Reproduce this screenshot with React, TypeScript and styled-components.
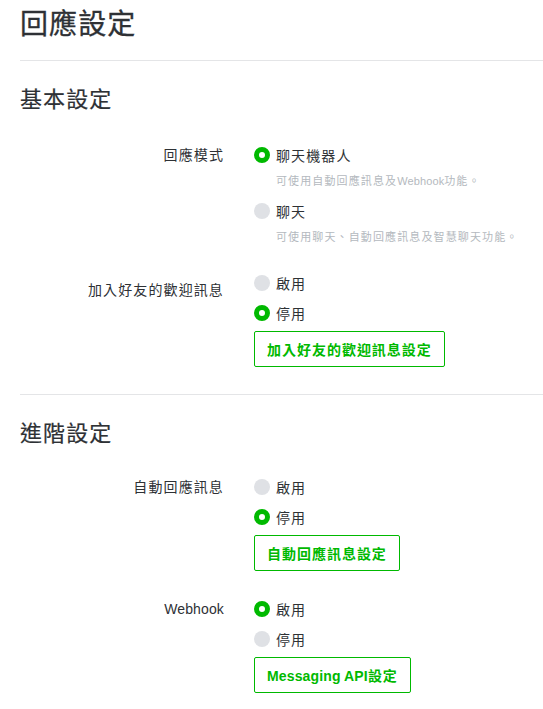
import * as React from "react"
import styled, { createGlobalStyle } from "styled-components"

const GREEN = "#00b900"

const GlobalStyle = createGlobalStyle`
    body {
        margin: 0;
        background: #fff;
        font-family: "Liberation Sans", "Noto Sans CJK TC", sans-serif;
        color: #2e3135;
        letter-spacing: 0.07em;
    }
`

const Page = styled.div`
    padding: 8px 0 40px 20px;
`

const Title = styled.h1`
    margin: 0;
    font-size: 28px;
    line-height: 34px;
    font-weight: 400;
    -webkit-text-stroke: 0.3px currentColor;
`

const Divider = styled.div<{ $top: number }>`
    height: 1px;
    background: #e4e5e7;
    margin-top: ${p => p.$top}px;
`

const Section = styled.section``

const SectionTitle = styled.h2`
    margin: 24px 0 0;
    font-size: 22px;
    line-height: 30px;
    font-weight: 400;
    -webkit-text-stroke: 0.2px currentColor;
`

const Fields = styled.div<{ $top: number }>`
    display: flex;
    flex-direction: column;
    gap: 28px;
    margin-top: ${p => p.$top}px;
`

const Field = styled.div`
    display: grid;
    grid-template-columns: 204px 1fr;
    column-gap: 30px;
`

const Label = styled.div<{ $offset?: number }>`
    text-align: right;
    font-size: 14px;
    line-height: 20px;
    padding-top: ${p => p.$offset || 0}px;
`

// latin words run tighter than the CJK text around them
const Latin = styled.span`
    letter-spacing: 0.01em;
`

const Options = styled.div`
    display: flex;
    flex-direction: column;
    align-items: flex-start;
`

const Option = styled.label`
    display: flex;
    align-items: center;
    gap: 6px;
    height: 20px;
    font-size: 14px;
    cursor: pointer;

    & + & {
        margin-top: 10px;
    }
`

const Radio = styled.span<{ $checked: boolean }>`
    box-sizing: border-box;
    width: 16px;
    height: 16px;
    border-radius: 50%;
    background: ${p => (p.$checked ? "#fff" : "#dfe1e5")};
    border: ${p => (p.$checked ? `5px solid ${GREEN}` : "none")};
`

const Desc = styled.div`
    margin: 8px 0 0 22px;
    font-size: 11px;
    line-height: 16px;
    color: #b4b9be;

    & + ${Option} {
        margin-top: 12px;
    }
`

const Button = styled.button`
    margin-top: 8px;
    height: 36px;
    padding: 0 12px;
    background: #fff;
    border: 1px solid ${GREEN};
    border-radius: 2px;
    color: ${GREEN};
    font-family: inherit;
    font-size: 14px;
    font-weight: bold;
    letter-spacing: 0.07em;
    cursor: pointer;
`

type Choice = { text: React.ReactNode; desc?: React.ReactNode; checked: boolean }
type Setting = { label: React.ReactNode; offset?: number; choices: Choice[]; button?: React.ReactNode }

const basic: Setting[] = [
    {
        label: "回應模式",
        choices: [
            { text: "聊天機器人", desc: <>可使用自動回應訊息及<Latin>Webhook</Latin>功能。</>, checked: true },
            { text: "聊天", desc: "可使用聊天、自動回應訊息及智慧聊天功能。", checked: false },
        ],
    },
    {
        label: "加入好友的歡迎訊息",
        offset: 7,
        choices: [
            { text: "啟用", checked: false },
            { text: "停用", checked: true },
        ],
        button: "加入好友的歡迎訊息設定",
    },
]

const advanced: Setting[] = [
    {
        label: "自動回應訊息",
        choices: [
            { text: "啟用", checked: false },
            { text: "停用", checked: true },
        ],
        button: "自動回應訊息設定",
    },
    {
        label: <Latin>Webhook</Latin>,
        choices: [
            { text: "啟用", checked: true },
            { text: "停用", checked: false },
        ],
        button: <><Latin>Messaging API</Latin>設定</>,
    },
]

function SettingRow({ setting }: { setting: Setting }) {
    return (
        <Field>
            <Label $offset={setting.offset}>{setting.label}</Label>
            <Options>
                {setting.choices.map((c, i) => (
                    <React.Fragment key={i}>
                        <Option>
                            <Radio $checked={c.checked} />
                            {c.text}
                        </Option>
                        {c.desc && <Desc>{c.desc}</Desc>}
                    </React.Fragment>
                ))}
                {setting.button && <Button>{setting.button}</Button>}
            </Options>
        </Field>
    )
}

export default function App() {
    return (
        <>
            <GlobalStyle />
            <Page>
                <Title>回應設定</Title>
                <Divider $top={18} />
                <Section>
                    <SectionTitle>基本設定</SectionTitle>
                    <Fields $top={30}>
                        {basic.map((s, i) => <SettingRow key={i} setting={s} />)}
                    </Fields>
                </Section>
                <Divider $top={27} />
                <Section>
                    <SectionTitle>進階設定</SectionTitle>
                    <Fields $top={28}>
                        {advanced.map((s, i) => <SettingRow key={i} setting={s} />)}
                    </Fields>
                </Section>
            </Page>
        </>
    )
}
